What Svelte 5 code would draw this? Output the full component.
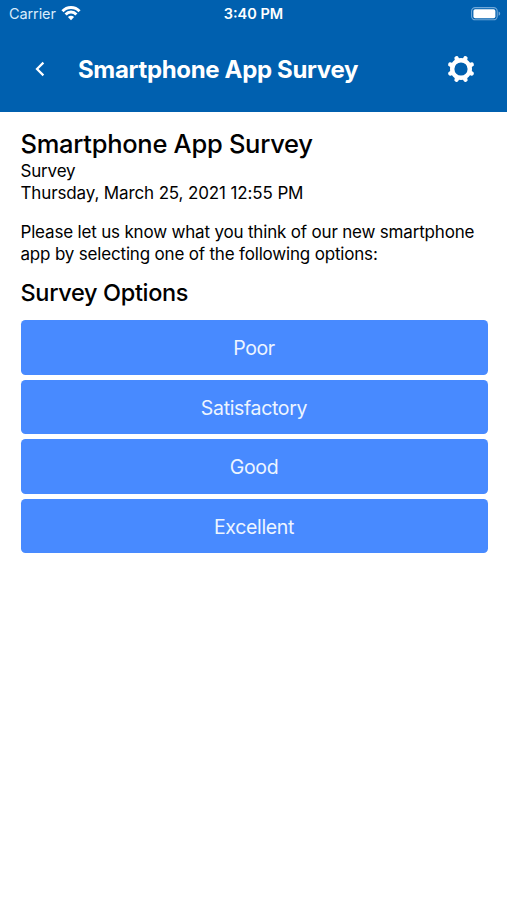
<script lang="ts">
	const title = 'Smartphone App Survey';
	const options = ['Poor', 'Satisfactory', 'Good', 'Excellent'];
	const teeth = [22.5, 67.5, 112.5, 157.5, 202.5, 247.5, 292.5, 337.5];
</script>

<div class="app">
	<header>
		<div class="status-bar">
			<div class="carrier">
				<span>Carrier</span>
				<svg width="20" height="15" viewBox="0 0 20 15" aria-hidden="true">
					<path d="M1.5 5.2C6 .2 14 .2 18.5 5.2" />
					<path d="M4.6 8.4C7.6 5.1 12.4 5.1 15.4 8.4" />
					<path class="dot" d="M10 14.2L6.9 11C8.6 9.3 11.4 9.3 13.1 11Z" />
				</svg>
			</div>
			<span class="time">3:40 PM</span>
			<svg class="battery" width="30" height="14" viewBox="0 0 30 14" aria-hidden="true">
				<rect class="shell" x=".6" y=".6" width="25.6" height="12.2" rx="3.6" />
				<rect class="charge" x="2.4" y="2.2" width="22" height="9" rx="1.8" />
				<path class="cap" d="M27.6 4.6Q29.2 5.2 29.2 6.7T27.6 8.8Z" />
			</svg>
		</div>
		<div class="toolbar">
			<button class="back" aria-label="Back">
				<svg width="10" height="16" viewBox="0 0 10 16">
					<path d="M8.4 1.6L2 8l6.4 6.4" />
				</svg>
			</button>
			<h1>{title}</h1>
			<button class="settings" aria-label="Settings">
				<svg width="28" height="28" viewBox="-14 -14 28 28">
					<circle r="8.8" />
					{#each teeth as angle}
						<path d="M0 -9.5V-11.6" transform="rotate({angle})" />
					{/each}
				</svg>
			</button>
		</div>
	</header>

	<main>
		<h2>{title}</h2>
		<div class="meta">Survey</div>
		<div class="meta date">Thursday, March 25, 2021 12:55 PM</div>
		<p>Please let us know what you think of our new smartphone app by selecting one of the following options:</p>
		<h3>Survey Options</h3>
		<div class="options">
			{#each options as option}
				<button class="option">{option}</button>
			{/each}
		</div>
	</main>
</div>

<style>
	:global(body) {
		background: #fff;
	}

	.app {
		min-height: 900px;
		background: #fff;
		color: #000;
		font-family: Inter, 'Liberation Sans', sans-serif;
	}

	button {
		border: 0;
		padding: 0;
		background: none;
		color: inherit;
		font-family: inherit;
	}

	svg {
		display: block;
		fill: none;
		stroke: #fff;
	}

	header {
		height: 112px;
		background: #0060af;
		color: #fff;
	}

	.status-bar {
		display: grid;
		grid-template-columns: 1fr auto 1fr;
		align-items: center;
		height: 27px;
		padding: 0 6px 0 9px;
		font-size: 14.5px;
	}

	.carrier {
		display: flex;
		align-items: center;
		gap: 5px;
		color: #d9ecfb;
		letter-spacing: -0.1px;
	}

	.carrier svg {
		stroke-width: 2.9;
	}

	.carrier .dot {
		fill: #fff;
		stroke: none;
	}

	.time {
		margin-right: 3px;
		font-weight: 600;
	}

	.battery {
		justify-self: end;
	}

	.shell {
		stroke: #70a8d8;
		stroke-width: 1.1;
	}

	.charge {
		fill: #fff;
		stroke: none;
	}

	.cap {
		fill: #70a8d8;
		stroke: none;
	}

	.toolbar {
		display: flex;
		align-items: center;
		height: 84px;
		padding: 0 32px 0 34px;
	}

	.back {
		width: 44px;
	}

	.back svg {
		margin-left: 1px;
		stroke-width: 2.2;
	}

	h1 {
		flex: 1;
		margin: 0;
		padding-top: 1px;
		font-size: 24px;
		font-weight: 700;
		letter-spacing: -0.34px;
		line-height: 30px;
		white-space: nowrap;
	}

	.settings svg {
		stroke-width: 4.4;
		stroke-linecap: round;
	}

	main {
		padding: 16px 19.5px 0 20.5px;
	}

	h2 {
		margin: 0;
		font-size: 25.5px;
		font-weight: 500;
		letter-spacing: -0.28px;
		line-height: 32px;
		white-space: nowrap;
	}

	.meta,
	p {
		font-size: 17px;
		letter-spacing: -0.18px;
		line-height: 22px;
	}

	.date {
		letter-spacing: -0.13px;
	}

	p {
		margin: 17px 0 12px;
	}

	h3 {
		margin: 0 0 11px;
		font-size: 23.5px;
		font-weight: 500;
		letter-spacing: -0.34px;
		line-height: 32px;
	}

	.options {
		display: grid;
		gap: 5px;
	}

	.option {
		height: 54.5px;
		padding-top: 2px;
		border-radius: 4.5px;
		background: #488aff;
		color: #edf5ff;
		font-size: 19.5px;
		letter-spacing: -0.34px;
	}
</style>
